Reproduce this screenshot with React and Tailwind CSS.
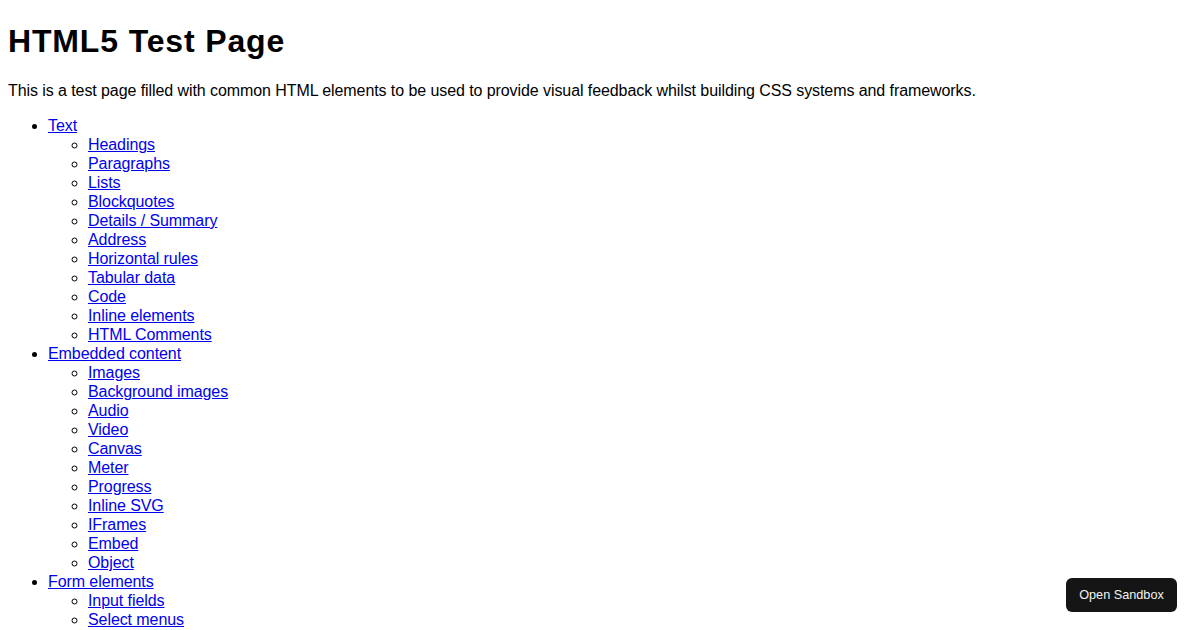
const sections = [
  {
    title: 'Text',
    items: [
      'Headings',
      'Paragraphs',
      'Lists',
      'Blockquotes',
      'Details / Summary',
      'Address',
      'Horizontal rules',
      'Tabular data',
      'Code',
      'Inline elements',
      'HTML Comments',
    ],
  },
  {
    title: 'Embedded content',
    items: [
      'Images',
      'Background images',
      'Audio',
      'Video',
      'Canvas',
      'Meter',
      'Progress',
      'Inline SVG',
      'IFrames',
      'Embed',
      'Object',
    ],
  },
  {
    title: 'Form elements',
    items: ['Input fields', 'Select menus', 'Checkboxes', 'Radio buttons', 'Textareas', 'HTML5 inputs', 'Action buttons'],
  },
]

function App() {
  return (
    <div className="min-h-screen bg-white px-2 pt-[23px] pb-2 text-black font-['Liberation_Sans',Arial,sans-serif] text-[16px] leading-[19px] tracking-[-0.08px]">
      <h1 className="text-[32px] font-bold leading-[37px] tracking-[0.85px] mb-[21px]">HTML5 Test Page</h1>
      <p className="mb-4">
        This is a test page filled with common HTML elements to be used to provide visual feedback whilst building CSS
        systems and frameworks.
      </p>
      <ul className="list-disc pl-10">
        {sections.map((s) => (
          <li key={s.title}>
            <a href="#" className="text-[#0000ee] underline">
              {s.title}
            </a>
            <ul className="list-[circle] pl-10">
              {s.items.map((item) => (
                <li key={item}>
                  <a href="#" className="text-[#0000ee] underline">
                    {item}
                  </a>
                </li>
              ))}
            </ul>
          </li>
        ))}
      </ul>

      <button className="fixed right-[23px] bottom-[18px] h-[34px] w-[111px] rounded-md bg-[#151515] text-[12.7px] tracking-normal text-[#f2f2f2] font-['Liberation_Sans',Arial,sans-serif]">
        Open Sandbox
      </button>
    </div>
  )
}

export default App
